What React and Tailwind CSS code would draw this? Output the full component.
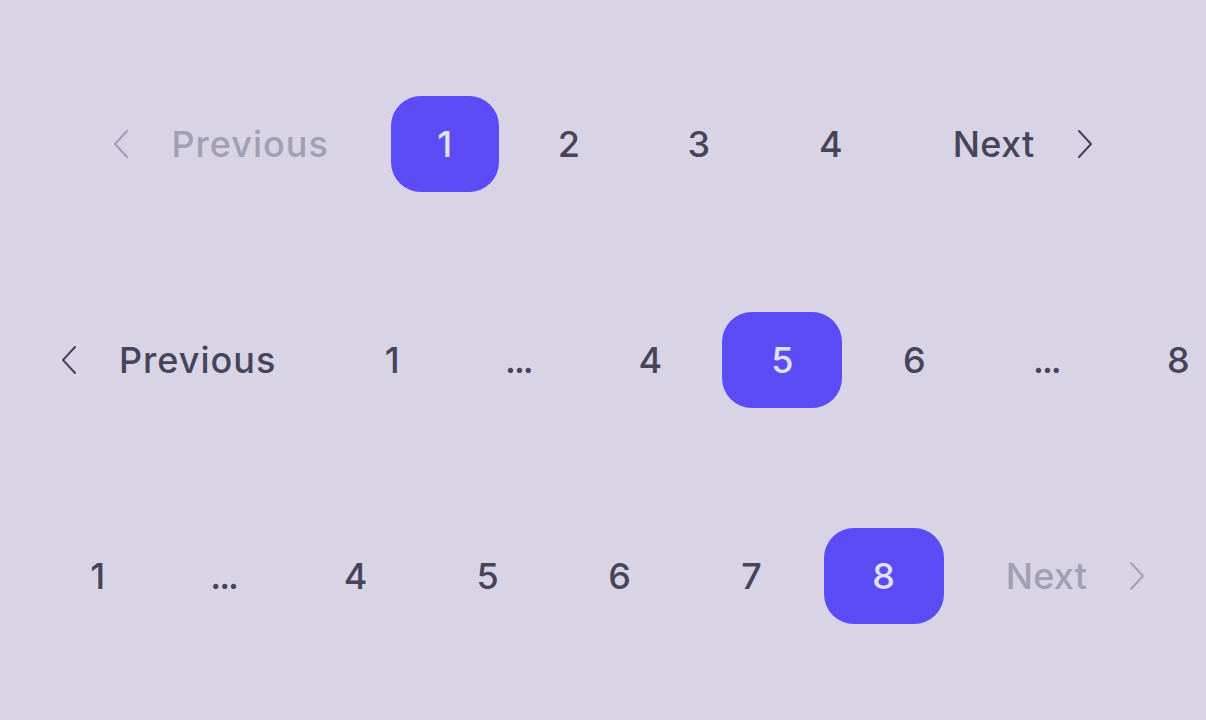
const Chevron = ({ dir, muted }) => (
  <svg
    width="14"
    height="28"
    viewBox="0 0 14 28"
    fill="none"
    stroke="currentColor"
    strokeWidth="2"
    strokeLinecap="round"
    strokeLinejoin="round"
    className={muted ? 'text-[#a29fb3]' : 'text-[#46435a]'}
  >
    {dir === 'left' ? <polyline points="13,1 1,14 13,27" /> : <polyline points="1,1 13,14 1,27" />}
  </svg>
);

const NavButton = ({ dir, label, disabled }) => {
  const color = disabled ? 'text-[#a29fb3]' : 'text-[#46435a]';
  return dir === 'left' ? (
    <button className={`flex h-[96px] shrink-0 items-center gap-[43px] pl-[18px] pr-[50px] ${color}`}>
      <Chevron dir="left" muted={disabled} />
      <span className="tracking-[1px]">{label}</span>
    </button>
  ) : (
    <button className={`flex h-[96px] shrink-0 items-center gap-[43px] pl-[50px] pr-[18px] ${color}`}>
      <span className="tracking-[0.3px]">{label}</span>
      <Chevron dir="right" muted={disabled} />
    </button>
  );
};

const widths = {
  '1': 'w-[108px]',
  '2': 'w-[116px]',
};

const PageButton = ({ label, active }) => {
  const w = widths[label] || 'w-[120px]';
  if (label === '...') {
    return (
      <span className={`flex h-[96px] ${w} shrink-0 items-center justify-center tracking-[-2px] text-[#46435a]`}>
        ...
      </span>
    );
  }
  return (
    <button
      className={`flex h-[96px] ${w} shrink-0 items-center justify-center rounded-[30px] ${
        active ? 'bg-[#5b4cf5] text-[#e4e0fa]' : 'text-[#46435a]'
      }`}
    >
      {label}
    </button>
  );
};

const Pagination = ({ pages, current, prevDisabled, nextDisabled, align = 'center' }) => (
  <nav className={`flex items-center gap-3 ${align === 'center' ? 'justify-center' : 'justify-start pl-[44px]'}`}>
    <NavButton dir="left" label="Previous" disabled={prevDisabled} />
    {pages.map((p, i) => (
      <PageButton key={i} label={p} active={p === current} />
    ))}
    <NavButton dir="right" label="Next" disabled={nextDisabled} />
  </nav>
);

const Edge = ({ pages, current }) => (
  <nav className="flex items-center justify-center gap-3">
    {pages.map((p, i) => (
      <PageButton key={i} label={p} active={p === current} />
    ))}
    <NavButton dir="right" label="Next" disabled />
  </nav>
);

export default function App() {
  return (
    <div className="flex h-[720px] w-[1206px] flex-col gap-[120px] overflow-hidden bg-[#d8d4e6] py-[96px] font-['Inter',sans-serif] text-[36px] font-medium leading-none">
      <Pagination pages={['1', '2', '3', '4']} current="1" prevDisabled />
      <Pagination pages={['1', '...', '4', '5', '6', '...', '8']} current="5" align="start" />
      <Edge pages={['1', '...', '4', '5', '6', '7', '8']} current="8" />
    </div>
  );
}
